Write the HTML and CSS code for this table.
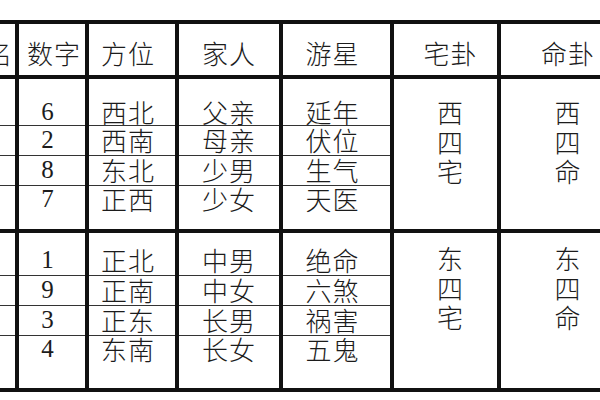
FILE: index.html
```html
<!DOCTYPE html>
<html lang="zh">
<head>
<meta charset="utf-8">
<title>八宅 卦位表</title>
<link rel="stylesheet" href="styles.css">
</head>
<body>
<div class="page">
  <table class="bagua">
    <colgroup>
      <col class="w-gua">
      <col class="w-num">
      <col class="w-dir">
      <col class="w-fam">
      <col class="w-star">
      <col class="w-house">
      <col class="w-life">
    </colgroup>
    <thead>
      <tr class="head">
        <th class="c-gua">卦名</th>
        <th class="c-num">数字</th>
        <th class="c-dir">方位</th>
        <th class="c-fam">家人</th>
        <th class="c-star">游星</th>
        <th class="c-house">宅卦</th>
        <th class="c-life">命卦</th>
      </tr>
    </thead>
    <tbody class="grp grp-west">
      <tr class="r1">
        <td class="c-gua">乾</td>
        <td class="c-num num">6</td>
        <td class="c-dir">西北</td>
        <td class="c-fam">父亲</td>
        <td class="c-star">延年</td>
        <td class="side c-house" rowspan="4"><span class="stack">西<br>四<br>宅</span></td>
        <td class="side c-life" rowspan="4"><span class="stack">西<br>四<br>命</span></td>
      </tr>
      <tr class="r2">
        <td class="c-gua">坤</td>
        <td class="c-num num">2</td>
        <td class="c-dir">西南</td>
        <td class="c-fam">母亲</td>
        <td class="c-star">伏位</td>
      </tr>
      <tr class="r3">
        <td class="c-gua">艮</td>
        <td class="c-num num">8</td>
        <td class="c-dir">东北</td>
        <td class="c-fam">少男</td>
        <td class="c-star">生气</td>
      </tr>
      <tr class="r4">
        <td class="c-gua">兑</td>
        <td class="c-num num">7</td>
        <td class="c-dir">正西</td>
        <td class="c-fam">少女</td>
        <td class="c-star">天医</td>
      </tr>
    </tbody>
    <tbody class="grp grp-east">
      <tr class="r1">
        <td class="c-gua">坎</td>
        <td class="c-num num">1</td>
        <td class="c-dir">正北</td>
        <td class="c-fam">中男</td>
        <td class="c-star">绝命</td>
        <td class="side c-house" rowspan="4"><span class="stack">东<br>四<br>宅</span></td>
        <td class="side c-life" rowspan="4"><span class="stack">东<br>四<br>命</span></td>
      </tr>
      <tr class="r2">
        <td class="c-gua">离</td>
        <td class="c-num num">9</td>
        <td class="c-dir">正南</td>
        <td class="c-fam">中女</td>
        <td class="c-star">六煞</td>
      </tr>
      <tr class="r3">
        <td class="c-gua">震</td>
        <td class="c-num num">3</td>
        <td class="c-dir">正东</td>
        <td class="c-fam">长男</td>
        <td class="c-star">祸害</td>
      </tr>
      <tr class="r4">
        <td class="c-gua">巽</td>
        <td class="c-num num">4</td>
        <td class="c-dir">东南</td>
        <td class="c-fam">长女</td>
        <td class="c-star">五鬼</td>
      </tr>
    </tbody>
  </table>
</div>
</body>
</html>
```

FILE: styles.css
```css
html, body {
  margin: 0;
  padding: 0;
  background: #ffffff;
}

.page {
  width: 600px;
  height: 400px;
  overflow: hidden;
  padding-top: 20px;
  box-sizing: border-box;
}

.bagua {
  border-collapse: collapse;
  table-layout: fixed;
  width: 682px;
  margin-left: -47px;
  border: 4px solid #111;
  font-family: "Noto Sans CJK SC", "Noto Sans CJK JP", sans-serif;
  font-size: 26px;
  font-weight: 300;
  letter-spacing: 1px;
  color: #1c1c1c;
}

.w-gua { width: 62px; }
.w-num { width: 70px; }
.w-dir { width: 90px; }
.w-fam { width: 104px; }
.w-star { width: 111px; }
.w-house { width: 107px; }
.w-life { width: 138px; }

th, td {
  padding: 0;
  text-align: center;
  border-left: 4px solid #111;
  border-right: 4px solid #111;
  font-weight: 300;
  line-height: 27px;
}

.head { height: 55px; }

.head th {
  border-top: 4px solid #111;
  border-bottom: 4px solid #111;
  vertical-align: middle;
  padding-top: 6px;
  line-height: 29px;
}

.grp tr td {
  border-top: 1px solid #333;
  border-bottom: 1px solid #333;
}

.grp .r1 td {
  border-top: 4px solid #111;
  vertical-align: bottom;
  padding-bottom: 2px;
}

.grp-west .r1 td {
  line-height: 25px;
  padding-bottom: 1px;
}

.grp .r2 td,
.grp .r3 td {
  vertical-align: bottom;
  padding-bottom: 2px;
}

.grp .r4 td {
  border-bottom: 4px solid #111;
  vertical-align: top;
  line-height: 26px;
}

.grp td.side {
  border-top: 4px solid #111;
  border-bottom: 4px solid #111;
  vertical-align: top;
  line-height: 29.5px;
  padding-bottom: 0;
}

.stack { display: inline-block; }

.grp-west .r1 { height: 48px; }
.grp-west .r2 { height: 30px; }
.grp-west .r3 { height: 29px; }
.grp-west .r4 { height: 46px; }

.grp-east .r1 { height: 44px; }
.grp-east .r2 { height: 29px; }
.grp-east .r3 { height: 29px; }
.grp-east .r4 { height: 55px; }

.grp-west .side { padding-top: 18px; }
.grp-east .side { padding-top: 10px; }

.num {
  font-family: "Liberation Serif", serif;
  font-size: 25px;
  letter-spacing: 0;
}

/* small horizontal offsets seen in the reference */
.c-num { padding-right: 9px; }
.head .c-num { padding-right: 0; padding-left: 4px; }
.c-dir { padding-right: 8px; }
.c-star { padding-right: 8px; }
.c-house { padding-left: 10px; }
```
